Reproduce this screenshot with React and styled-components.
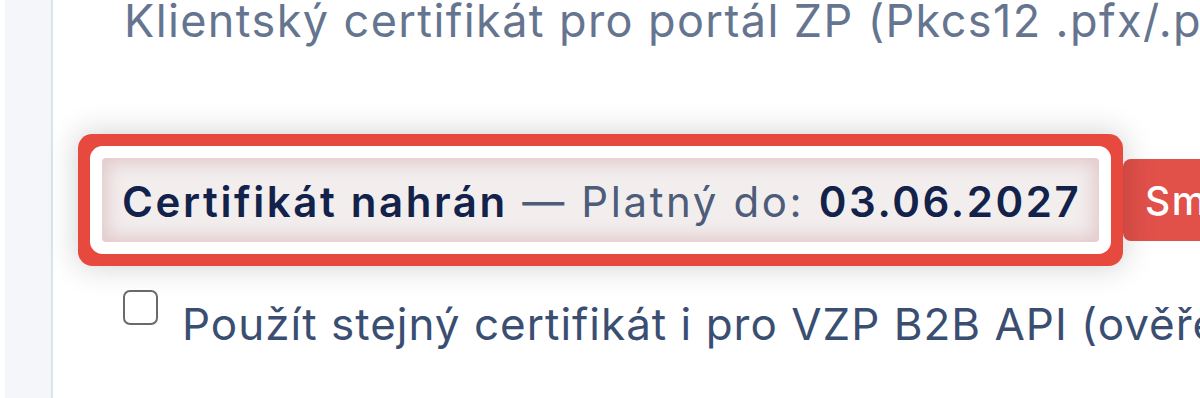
import React from "react";
import styled, { createGlobalStyle } from "styled-components";

const Global = createGlobalStyle`
  html, body { margin: 0; padding: 0; background: #fff; }
  body { font-family: "Inter", "Noto Sans", sans-serif; overflow: hidden; }
`;

const Page = styled.div`
  display: flex;
  height: 398px;
  width: 1200px;
  overflow: hidden;
  background: #fff;
`;

const Sidebar = styled.div`
  flex: 0 0 46px;
  margin-left: 5px;
  background: #f4f6f9;
  border-right: 2px solid #d4e6ee;
`;

const Main = styled.div`
  flex: 1;
  display: flex;
  flex-direction: column;
  padding-left: 49px;
  min-width: 0;
`;

const Title = styled.div`
  margin: -5px 0 0 22px;
  font-size: 45px;
  line-height: 52px;
  color: #66758f;
  white-space: nowrap;
  letter-spacing: 1.4px;
`;

const Row = styled.div`
  display: flex;
  align-items: stretch;
  gap: 24px;
  margin-top: 111px;
  white-space: nowrap;
`;

const Status = styled.div`
  position: relative;
  z-index: 1;
  flex: 0 0 auto;
  width: 997px;
  box-sizing: border-box;
  height: 84px;
  display: flex;
  align-items: center;
  padding-left: 20px;
  padding-top: 2px;
  border-radius: 4px;
  background: #f3eeee;
  font-size: 42px;
  letter-spacing: 2.6px;
  color: #4b5b78;
  box-shadow: inset 0 0 18px 5px rgba(205, 155, 155, 0.45),
    0 0 0 12px #ffffff, 0 0 0 24px #e8493f,
    0 0 30px 26px rgba(0, 0, 0, 0.17);
`;

const Strong = styled.span`
  font-weight: 600;
  color: #13224a;
`;

const Muted = styled.span`
  font-weight: 400;
  color: #4d5c79;
`;

const DangerButton = styled.button`
  flex: 0 0 auto;
  border: none;
  border-radius: 8px;
  background: #e2504a;
  color: #fff;
  font-family: inherit;
  font-size: 39px;
  font-weight: 500;
  letter-spacing: 1.5px;
  padding: 0 22px;
  height: 82px;
  align-self: center;
`;

const CheckRow = styled.label`
  display: flex;
  align-items: center;
  gap: 24px;
  margin-top: 55px;
  margin-left: 21px;
  white-space: nowrap;
  font-size: 44px;
  letter-spacing: 1px;
  color: #3a4e72;
`;

const Box = styled.span`
  flex: 0 0 auto;
  width: 31px;
  height: 31px;
  border: 2.5px solid #6a6a6a;
  border-radius: 7px;
  background: #fff;
  margin-top: -34px;
`;

export default function App() {
  return (
    <>
      <Global />
      <Page>
        <Sidebar />
        <Main>
          <Title>Klientský certifikát pro portál ZP (Pkcs12 .pfx/.p12)</Title>
          <Row>
            <Status>
              <Strong>Certifikát nahrán</Strong>
              <Muted>&nbsp;— Platný do:&nbsp;</Muted>
              <Strong>03.06.2027</Strong>
            </Status>
            <DangerButton>Smazat</DangerButton>
          </Row>
          <CheckRow>
            <Box />
            Použít stejný certifikát i pro VZP B2B API (ověření)
          </CheckRow>
        </Main>
      </Page>
    </>
  );
}
